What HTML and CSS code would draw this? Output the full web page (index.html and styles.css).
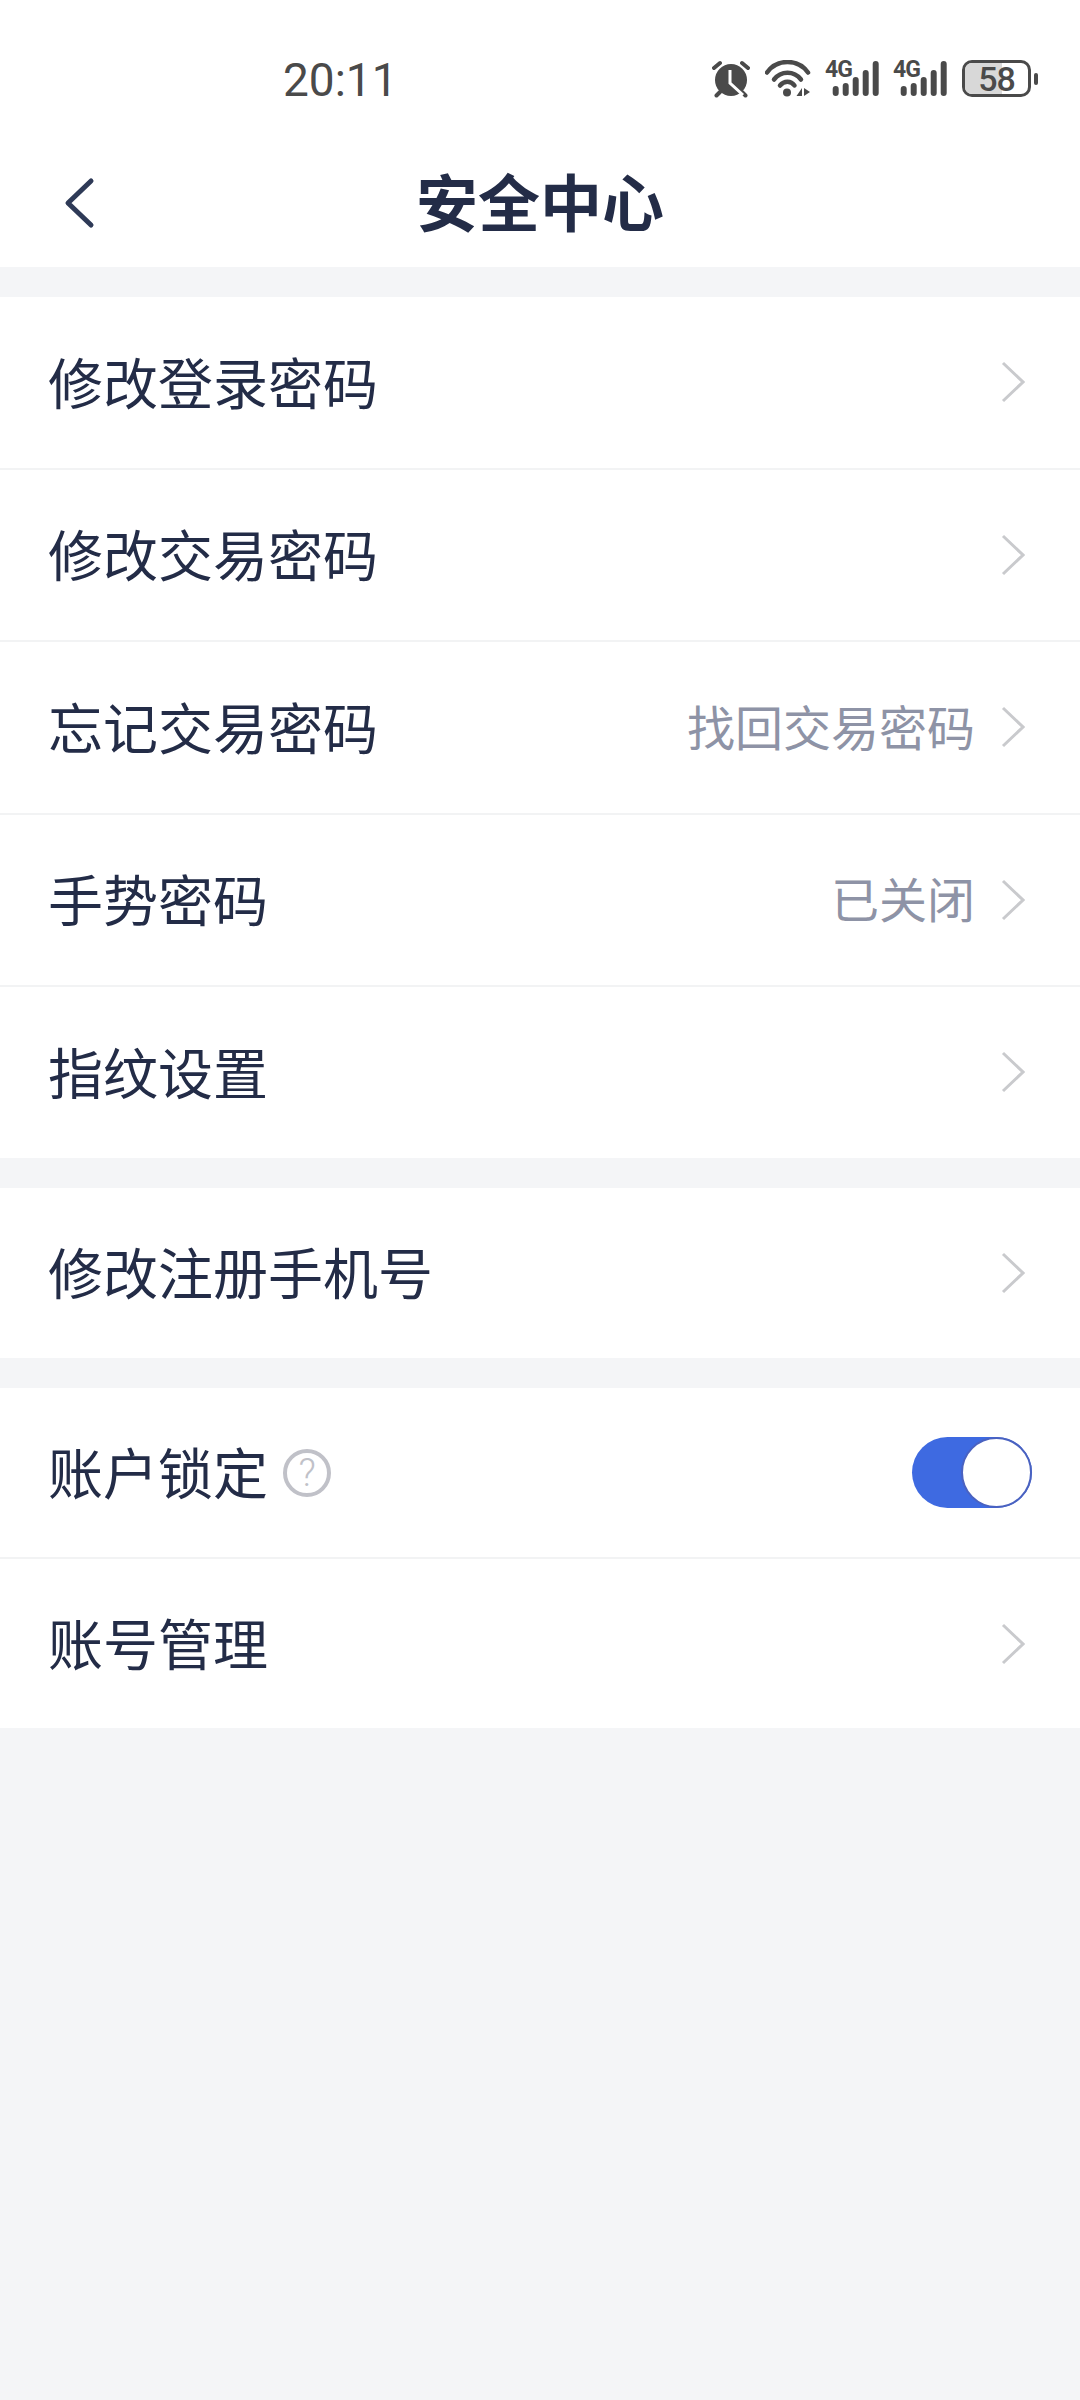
FILE: index.html
```html
<!DOCTYPE html>
<html lang="zh-CN">
<head>
<meta charset="utf-8">
<title>安全中心</title>
<link rel="stylesheet" href="styles.css">
</head>
<body>
<header class="header">
  <div class="status">
    <span class="time">20:11</span>
    <div class="status-icons">
      <svg class="ic-alarm" width="38" height="38" viewBox="0 0 38 38">
        <circle cx="19" cy="20" r="16" fill="#4a4a4a"/>
        <path d="M2 8 L8 3 M36 8 L30 3 M4.500 35.500 L8 32 M33.500 35.500 L30 32" stroke="#4a4a4a" stroke-width="4" stroke-linecap="round" fill="none"/>
        <path d="M18 10 V23 L31 35" stroke="#fff" stroke-width="3" fill="none"/>
      </svg>
      <svg class="ic-wifi" width="48" height="38" viewBox="0 0 48 38">
        <path d="M2 12.500 C12 -1.500 33 -1.500 43 12.500" stroke="#4a4a4a" stroke-width="4.500" stroke-linecap="round" fill="none"/>
        <path d="M9 19.500 C16 10.500 29 10.500 36 19.500" stroke="#4a4a4a" stroke-width="4.500" stroke-linecap="round" fill="none"/>
        <path d="M15 25.500 C19 20.500 26 20.500 29.500 25.500" stroke="#4a4a4a" stroke-width="4.500" stroke-linecap="round" fill="none"/>
        <circle cx="22" cy="32.500" r="4" fill="#4a4a4a"/>
        <path d="M37 28 V36 L31.500 36 Z M39 28 L39 36 L45 32 Z" fill="#4a4a4a"/>
      </svg>
      <div class="signal">
        <span class="net">4G</span>
        <svg width="56" height="38" viewBox="0 0 56 38">
          <path d="M10.700 29 V33 M20.700 26 V33 M30.700 20 V33 M40.700 13 V33 M50.700 4 V33" stroke="#4a4a4a" stroke-width="6" stroke-linecap="round" fill="none"/>
        </svg>
      </div>
      <div class="signal">
        <span class="net">4G</span>
        <svg width="56" height="38" viewBox="0 0 56 38">
          <path d="M10.700 29 V33 M20.700 26 V33 M30.700 20 V33 M40.700 13 V33 M50.700 4 V33" stroke="#4a4a4a" stroke-width="6" stroke-linecap="round" fill="none"/>
        </svg>
      </div>
      <div class="battery">
        <div class="battery-body"><span class="battery-fill"></span><span class="battery-num">58</span></div>
        <span class="battery-nub"></span>
      </div>
    </div>
  </div>
  <nav class="nav">
    <svg class="back" width="34" height="54" viewBox="0 0 34 54">
      <path d="M29 5 L6 27 L29 49" stroke="#2e3a57" stroke-width="5" stroke-linecap="round" stroke-linejoin="round" fill="none"/>
    </svg>
    <h1 class="title">安全中心</h1>
  </nav>
</header>

<main>
  <section class="group">
    <div class="row"><span class="label">修改登录密码</span><svg class="chev" width="24" height="42" viewBox="0 0 24 42"><path d="M2 2 L22 21 L2 40"/></svg></div>
    <div class="row"><span class="label">修改交易密码</span><svg class="chev" width="24" height="42" viewBox="0 0 24 42"><path d="M2 2 L22 21 L2 40"/></svg></div>
    <div class="row"><span class="label">忘记交易密码</span><span class="value">找回交易密码</span><svg class="chev" width="24" height="42" viewBox="0 0 24 42"><path d="M2 2 L22 21 L2 40"/></svg></div>
    <div class="row"><span class="label">手势密码</span><span class="value">已关闭</span><svg class="chev" width="24" height="42" viewBox="0 0 24 42"><path d="M2 2 L22 21 L2 40"/></svg></div>
    <div class="row"><span class="label">指纹设置</span><svg class="chev" width="24" height="42" viewBox="0 0 24 42"><path d="M2 2 L22 21 L2 40"/></svg></div>
  </section>
  <section class="group">
    <div class="row"><span class="label">修改注册手机号</span><svg class="chev" width="24" height="42" viewBox="0 0 24 42"><path d="M2 2 L22 21 L2 40"/></svg></div>
  </section>
  <section class="group group-tight">
    <div class="row">
      <span class="label">账户锁定</span><span class="help">?</span>
      <div class="toggle"><span class="knob"></span></div>
    </div>
    <div class="row"><span class="label">账号管理</span><svg class="chev" width="24" height="42" viewBox="0 0 24 42"><path d="M2 2 L22 21 L2 40"/></svg></div>
  </section>
</main>
</body>
</html>
```
FILE: styles.css
```css
* { box-sizing: border-box; }
html, body { margin: 0; padding: 0; }
body {
  width: 1080px;
  height: 2400px;
  background: #f4f5f7;
  font-family: "Noto Sans CJK SC", "Noto Sans", sans-serif;
  color: #232c47;
  overflow: hidden;
}
.header { background: #fff; height: 267px; }
.status {
  height: 120px;
  display: flex;
  align-items: flex-start;
  padding: 60px 42px 0 283px;
  justify-content: space-between;
}
.time {
  font-family: Roboto, sans-serif;
  font-size: 46px;
  line-height: 40px;
  color: #4a4a4a;
}
.status-icons { display: flex; align-items: flex-start; }
.ic-alarm { margin-right: 15px; display: block; }
.ic-wifi { margin-right: 12px; display: block; }
.signal { position: relative; width: 56px; height: 38px; margin-right: 12px; }
.signal + .battery { margin-left: 1px; }
.signal svg { display: block; }
.net {
  position: absolute;
  left: 0;
  top: -1px;
  font-family: Roboto, sans-serif;
  font-weight: 700;
  font-size: 23px;
  line-height: 22px;
  color: #4a4a4a;
  letter-spacing: -1px;
}
.battery { display: flex; align-items: center; height: 37px; }
.battery-body {
  position: relative;
  width: 69px;
  height: 37px;
  border: 3.500px solid #4a4a4a;
  border-radius: 10px;
  overflow: hidden;
  display: flex;
  align-items: center;
  justify-content: center;
}
.battery-fill { position: absolute; left: 0; top: 0; bottom: 0; width: 58%; background: #d8d8d8; }
.battery-num {
  position: relative;
  font-family: Roboto, sans-serif;
  font-size: 34px;
  font-weight: 500;
  line-height: 30px;
  letter-spacing: -1px;
  color: #4a4a4a;
}
.battery-nub { width: 4px; height: 12px; margin-left: 3px; border-radius: 2px; background: #4a4a4a; }
.nav {
  position: relative;
  height: 147px;
  display: flex;
  align-items: center;
  justify-content: center;
}
.back { position: absolute; left: 62px; top: 56px; }
.title {
  margin: 13px 0 0;
  font-size: 62px;
  line-height: 80px;
  font-weight: 700;
  color: #232c47;
}
.group { background: #fff; margin-top: 30px; }
.row {
  height: 172.500px;
  display: flex;
  align-items: center;
  padding: 0 46px 0 48px;
  border-bottom: 2px solid #f2f3f4;
}
.row:last-child { height: 170.500px; border-bottom: 0; }
.group-tight .row { height: 171px; }
.group-tight .row:last-child { height: 169px; }
.label { font-size: 55px; line-height: 70px; color: #232c47; margin-right: auto; margin-bottom: 5px; }
.label:has(+ .help) { margin-right: 0; }
.value { font-size: 48px; line-height: 64px; color: #8e93a6; margin-right: 26px; margin-bottom: 5px; }
.chev { display: block; margin-right: 9px; }
.chev path { fill: none; stroke: #c9cacd; stroke-width: 3px; }
.help {
  width: 48px;
  height: 48px;
  margin-left: 15px;
  margin-right: auto;
  border: 4px solid #c0c1c8;
  border-radius: 50%;
  display: flex;
  align-items: center;
  justify-content: center;
  font-family: Roboto, sans-serif;
  font-size: 38px;
  font-weight: 300;
  line-height: 1;
  color: #c0c1c8;
}
.toggle {
  width: 120px;
  height: 71px;
  margin-right: 2px;
  border-radius: 36px;
  background: #3e6ae1;
  display: flex;
  justify-content: flex-end;
}
.knob {
  width: 71px;
  height: 71px;
  border-radius: 50%;
  background: #fff;
  border: 2px solid #4a62c0;
}
```
